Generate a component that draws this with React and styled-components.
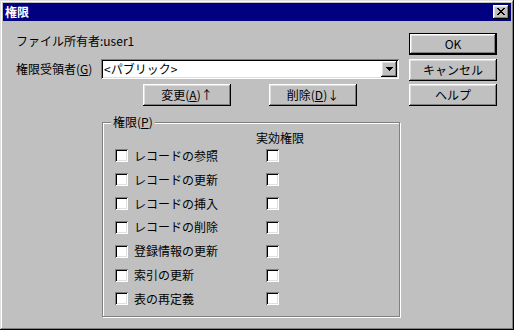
import React from 'react';
import styled, { createGlobalStyle, css } from 'styled-components';

const Global = createGlobalStyle`
  html, body { margin: 0; padding: 0; background: #c0c0c0; }
  body {
    font-family: "Noto Sans CJK JP", "MS UI Gothic", "DejaVu Sans", sans-serif;
    font-size: 12px;
    color: #000;
  }
  * { box-sizing: border-box; }
`;

const raised = css`
  background: #c0c0c0;
  box-shadow: inset -1px -1px #000, inset 1px 1px #fff, inset -2px -2px #808080, inset 2px 2px #dfdfdf;
`;

const sunken = css`
  box-shadow: inset 1px 1px #808080, inset -1px -1px #fff, inset 2px 2px #000, inset -2px -2px #dfdfdf;
`;

const Window = styled.div`
  width: 514px;
  height: 330px;
  padding: 3px;
  background: #c0c0c0;
  box-shadow: inset -1px -1px #000, inset 1px 1px #dfdfdf, inset -2px -2px #808080, inset 2px 2px #fff;
  display: flex;
  flex-direction: column;
`;

const TitleBar = styled.div`
  height: 18px;
  background: #000080;
  color: #fff;
  display: flex;
  align-items: center;
  justify-content: space-between;
  padding: 0 2px;
  font-weight: bold;
  line-height: 12px;
`;

const CloseButton = styled.span`
  ${raised};
  width: 16px;
  height: 14px;
  display: flex;
  align-items: center;
  justify-content: center;
  padding-bottom: 1px;
`;

const Body = styled.div`
  display: flex;
  padding: 0 14px 0 13px;
  gap: 9px;
`;

const Main = styled.div`
  width: 385px;
  display: flex;
  flex-direction: column;
`;

const Side = styled.div`
  width: 88px;
  margin-top: 12px;
  display: flex;
  flex-direction: column;
  gap: 3.5px;
`;

const OwnerRow = styled.div`
  margin-top: 10px;
  height: 20px;
  display: flex;
  align-items: center;
  line-height: 12px;
`;

const ComboRow = styled.div`
  margin-top: 8px;
  height: 20px;
  display: flex;
  align-items: center;
  line-height: 12px;
`;

const FieldLabel = styled.span`
  width: 85px;
`;

const Combo = styled.div`
  width: 298px;
  height: 20px;
  background: #fff;
  padding: 2px;
  display: flex;
  align-items: center;
  ${sunken};
`;

const ComboText = styled.span`
  flex: 1;
  padding-left: 1px;
  line-height: 12px;
`;

const DropButton = styled.span`
  ${raised};
  width: 16px;
  height: 16px;
  display: flex;
  align-items: center;
  justify-content: center;
`;

const ButtonRow = styled.div`
  margin-top: 5px;
  padding-left: 127px;
  display: flex;
  gap: 38px;
`;

const Button = styled.button`
  ${raised};
  width: 88px;
  height: 22px;
  border: none;
  padding: 0;
  margin: 0;
  font: inherit;
  line-height: 12px;
  color: #000;
  display: flex;
  align-items: center;
  justify-content: center;
  ${p => p.$default && css`
    box-shadow: inset 0 0 0 1px #000, inset -2px -2px #000, inset 2px 2px #fff, inset -3px -3px #808080, inset 3px 3px #dfdfdf;
  `}
`;

const Mn = styled.span`
  text-decoration: underline;
  text-underline-offset: 1px;
`;

const Group = styled.div`
  margin: 16px 0 0 86px;
  width: 298px;
  border: 1px solid #808080;
  box-shadow: 1px 1px 0 #fff, inset 1px 1px 0 #fff;
  padding: 0 0 5px 12px;
  display: flex;
  flex-direction: column;
`;

const GroupLabel = styled.div`
  margin: -7px 0 0 -4px;
  padding: 0 2px;
  width: fit-content;
  background: #c0c0c0;
  line-height: 12px;
`;

const Row = styled.div`
  display: flex;
  align-items: center;
  height: ${p => (p.$header ? '12px' : '23.83px')};
  margin-top: ${p => (p.$header ? '4px' : '0')};
  line-height: 12px;
`;

const LeftCell = styled.div`
  width: 141px;
  display: flex;
  align-items: center;
  gap: 6px;
`;

const RightCell = styled.div`
  display: flex;
  align-items: center;
  padding-left: ${p => (p.$header ? '0' : '10px')};
`;

const Check = styled.span`
  display: inline-block;
  width: 13px;
  height: 13px;
  background: #fff;
  ${sunken};
`;

const perms = [
  'レコードの参照',
  'レコードの更新',
  'レコードの挿入',
  'レコードの削除',
  '登録情報の更新',
  '索引の更新',
  '表の再定義',
];

const CloseIcon = () => (
  <svg width="8" height="7" viewBox="0 0 8 7" shapeRendering="crispEdges">
    <path d="M0 0h2v1H0zM6 0h2v1H6zM1 1h2v1H1zM5 1h2v1H5zM2 2h4v1H2zM3 3h2v1H3zM2 4h4v1H2zM1 5h2v1H1zM5 5h2v1H5zM0 6h2v1H0zM6 6h2v1H6z" fill="#000" />
  </svg>
);

const DownTriangle = () => (
  <svg width="7" height="4" viewBox="0 0 7 4" shapeRendering="crispEdges">
    <path d="M0 0h7v1H0zM1 1h5v1H1zM2 2h3v1H2zM3 3h1v1H3z" fill="#000" />
  </svg>
);

export default function App() {
  return (
    <>
      <Global />
      <Window>
        <TitleBar>
          <span>権限</span>
          <CloseButton><CloseIcon /></CloseButton>
        </TitleBar>
        <Body>
          <Main>
            <OwnerRow>ファイル所有者:user1</OwnerRow>
            <ComboRow>
              <FieldLabel>権限受領者(<Mn>G</Mn>)</FieldLabel>
              <Combo>
                <ComboText>&lt;パブリック&gt;</ComboText>
                <DropButton><DownTriangle /></DropButton>
              </Combo>
            </ComboRow>
            <ButtonRow>
              <Button>変更(<Mn>A</Mn>)↑</Button>
              <Button>削除(<Mn>D</Mn>)↓</Button>
            </ButtonRow>
            <Group>
              <GroupLabel>権限(<Mn>P</Mn>)</GroupLabel>
              <Row $header>
                <LeftCell />
                <RightCell $header>実効権限</RightCell>
              </Row>
              {perms.map(p => (
                <Row key={p}>
                  <LeftCell>
                    <Check />
                    <span>{p}</span>
                  </LeftCell>
                  <RightCell>
                    <Check />
                  </RightCell>
                </Row>
              ))}
            </Group>
          </Main>
          <Side>
            <Button $default>OK</Button>
            <Button>キャンセル</Button>
            <Button>ヘルプ</Button>
          </Side>
        </Body>
      </Window>
    </>
  );
}
